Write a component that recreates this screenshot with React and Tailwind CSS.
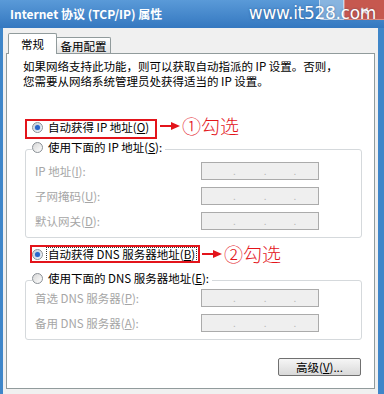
import React from 'react';

const Radio = ({ checked }) => (
  <span className="w-[11px] h-[11px] rounded-full border border-[#8a9096] bg-linear-to-br from-[#d6d6d6] to-white flex items-center justify-center shrink-0">
    {checked && <span className="w-[5px] h-[5px] rounded-full bg-[#2a66c9] shadow-[0_0_2px_#5b9bf0]" />}
  </span>
);

const IpBox = () => (
  <div className="w-[118px] h-[18px] border border-[#ababab] bg-[#efefef] flex items-center text-[#b8b8b8] text-[10px] leading-none">
    <span className="w-[31px]" />
    <span>.</span>
    <span className="w-[28px]" />
    <span>.</span>
    <span className="w-[27px]" />
    <span>.</span>
  </div>
);

const Arrow = () => (
  <svg width="20" height="10" viewBox="0 0 20 10">
    <line x1="0" y1="5" x2="13" y2="5" stroke="#e3141b" strokeWidth="2" />
    <polygon points="11,1 20,5 11,9" fill="#e3141b" />
  </svg>
);

const Field = ({ label }) => (
  <div className="flex items-center h-[18px]">
    <span className="w-[166px] text-[#a6a6a6]">{label}</span>
    <IpBox />
  </div>
);

const App = () => {
  return (
    <div className="w-[384px] h-[394px] overflow-hidden bg-[#3f86c9] flex flex-col [font-family:'Noto_Sans_CJK_SC',sans-serif] text-[11.5px] leading-[14px] text-black">
      {/* Title bar */}
      <div className="relative h-[28px] shrink-0 bg-linear-to-b from-[#5a9ad8] to-[#3478c0] flex items-start pl-[10px]">
        <span className="mt-[7px] text-white font-bold text-[12px] leading-[14px]">Internet 协议 (TCP/IP) 属性</span>
        <div className="ml-auto flex">
          <div className="w-[25px] h-[20px] bg-[#a9c8e6]/60 border border-[#e6f0fa]/60 border-t-0 rounded-bl-[3px] flex items-center justify-center text-white/80 text-[11px] font-bold">?</div>
          <div className="w-[40px] h-[20px] bg-[#c6584f] border border-[#e8b0a8]/60 border-t-0 border-r-0 flex items-center justify-center text-white/80 text-[11px] font-bold">✕</div>
        </div>
        <span className="absolute right-[8px] top-[2px] text-white text-[17px] leading-[22px] tracking-[-0.3px] [font-family:'DejaVu_Sans',sans-serif] [text-shadow:0_0_2px_rgba(0,40,90,0.5)]">
          www.it528.com
        </span>
      </div>

      {/* Body */}
      <div className="flex-1 ml-[3px] mr-[6px] bg-[#f0f0f0] px-[3px] pt-[5px]">
        {/* Tabs */}
        <div className="flex items-end pl-[2px]">
          <div className="relative z-10 -mb-px w-[49px] h-[21px] bg-white border border-b-0 border-[#919b9c] rounded-t-[2px] flex items-center justify-center">
            常规
          </div>
          <div className="w-[54px] h-[16px] bg-linear-to-b from-white to-[#e3e3e3] border border-l-0 border-b-0 border-[#919b9c] rounded-tr-[2px] flex items-center justify-center">
            备用配置
          </div>
        </div>

        {/* Panel */}
        <div className="h-[336px] bg-white border border-[#919b9c] flex flex-col">
          <div className="pt-[5px] pl-[16px] leading-[15px]">
            <p>如果网络支持此功能，则可以获取自动指派的 IP 设置。否则，</p>
            <p>您需要从网络系统管理员处获得适当的 IP 设置。</p>
          </div>

          {/* Auto IP */}
          <div className="relative mt-[31px] h-[14px] pl-[25px] flex items-center gap-[5px]">
            <Radio checked />
            <span>自动获得 IP 地址(<u>O</u>)</span>
            <div className="absolute left-[18px] top-[-1px] w-[132px] h-[20px] border-2 border-[#e3141b]" />
            <div className="absolute left-[153px] top-[-5px] h-[22px] flex items-center gap-[2px] text-[#e3141b] text-[19px] leading-[22px] font-light">
              <Arrow />
              <span>①勾选</span>
            </div>
          </div>

          {/* Manual IP group */}
          <fieldset className="mt-[6px] ml-[18px] w-[337px] border border-[#d5d9dc] rounded-[3px] pb-[7px]">
            <legend className="ml-[6px] pr-[3px] h-[18px]">
              <span className="flex items-center gap-[5px] h-[14px]">
                <Radio />
                <span>使用下面的 IP 地址(<u>S</u>):</span>
              </span>
            </legend>
            <div className="mt-[4px] pl-[9px] flex flex-col gap-[7px]">
              <Field label={<>IP 地址(<u>I</u>):</>} />
              <Field label={<>子网掩码(<u>U</u>):</>} />
              <Field label={<>默认网关(<u>D</u>):</>} />
            </div>
          </fieldset>

          {/* Auto DNS */}
          <div className="relative mt-[9px] h-[14px] pl-[25px] flex items-center gap-[3px]">
            <Radio checked />
            <span className="border border-dotted border-[#333] pl-[1px] pr-[1px] leading-[13px]">自动获得 DNS 服务器地址(<u>B</u>)</span>
            <div className="absolute left-[23px] top-[-2px] w-[170px] h-[18px] border-2 border-[#e3141b]" />
            <div className="absolute left-[195px] top-[-4px] h-[22px] flex items-center gap-[2px] text-[#e3141b] text-[19px] leading-[22px] font-light">
              <Arrow />
              <span>②勾选</span>
            </div>
          </div>

          {/* Manual DNS group */}
          <fieldset className="mt-[10px] ml-[18px] w-[337px] border border-[#d5d9dc] rounded-[3px] pb-[7px]">
            <legend className="ml-[6px] pr-[3px] h-[18px]">
              <span className="flex items-center gap-[5px] h-[14px]">
                <Radio />
                <span>使用下面的 DNS 服务器地址(<u>E</u>):</span>
              </span>
            </legend>
            <div className="pl-[9px] flex flex-col gap-[7px]">
              <Field label={<>首选 DNS 服务器(<u>P</u>):</>} />
              <Field label={<>备用 DNS 服务器(<u>A</u>):</>} />
            </div>
          </fieldset>

          <div className="mt-[18px] ml-[18px] w-[337px] flex justify-end">
            <button className="mr-[1px] w-[83px] h-[18px] border border-[#707070] rounded-[2px] bg-linear-to-b from-[#f6f6f6] to-[#d9d9d9] flex items-center justify-center text-[11.5px]">
              高级(<u>V</u>)...
            </button>
          </div>
        </div>
      </div>
    </div>
  );
};

export default App;
